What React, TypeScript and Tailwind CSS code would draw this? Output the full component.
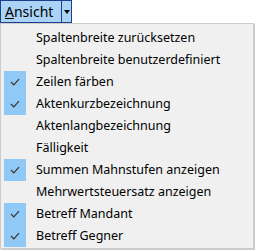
const items = [
  { label: 'Spaltenbreite zurücksetzen', checked: false },
  { label: 'Spaltenbreite benutzerdefiniert', checked: false },
  { label: 'Zeilen färben', checked: true },
  { label: 'Aktenkurzbezeichnung', checked: true },
  { label: 'Aktenlangbezeichnung', checked: false },
  { label: 'Fälligkeit', checked: false },
  { label: 'Summen Mahnstufen anzeigen', checked: true },
  { label: 'Mehrwertsteuersatz anzeigen', checked: false },
  { label: 'Betreff Mandant', checked: true },
  { label: 'Betreff Gegner', checked: true },
];

function Check() {
  return (
    <svg width="10" height="8" viewBox="0 0 10 8" fill="none">
      <path d="M1 4 L3.8 6.8 L9 1.2" stroke="#333" strokeWidth="1.2" />
    </svg>
  );
}

export default function App() {
  return (
    <div className="w-[255px] h-[250px] bg-white text-[12.5px] text-black" style={{ fontFamily: '"Noto Sans", "Open Sans", sans-serif' }}>
      <div className="flex h-[23px] w-[72px] border border-[#1c3f8c] bg-[#abd3f5]">
        <div className="flex w-[60px] items-center pl-[4px] text-[14px]">
          <span className="underline underline-offset-1">A</span>nsicht
        </div>
        <div className="flex flex-1 items-center justify-center border-l border-[#1c3f8c]">
          <div className="h-0 w-0 border-x-[3.5px] border-t-[4px] border-x-transparent border-t-black" />
        </div>
      </div>
      <div className="h-[226px] w-[254px] border border-[#cccccc] bg-[#f0f0f0] px-[2px] py-[3px] shadow-[1px_1px_1px_rgba(0,0,0,0.2)]">
        {items.map(item => (
          <div key={item.label} className="flex h-[22px] items-center">
            <div className={`flex h-[22px] w-[22px] ml-[1px] items-center justify-center ${item.checked ? 'bg-[#90c8f6]' : ''}`}>
              {item.checked && <Check />}
            </div>
            <span className="ml-[10px] whitespace-nowrap">{item.label}</span>
          </div>
        ))}
      </div>
    </div>
  );
}
